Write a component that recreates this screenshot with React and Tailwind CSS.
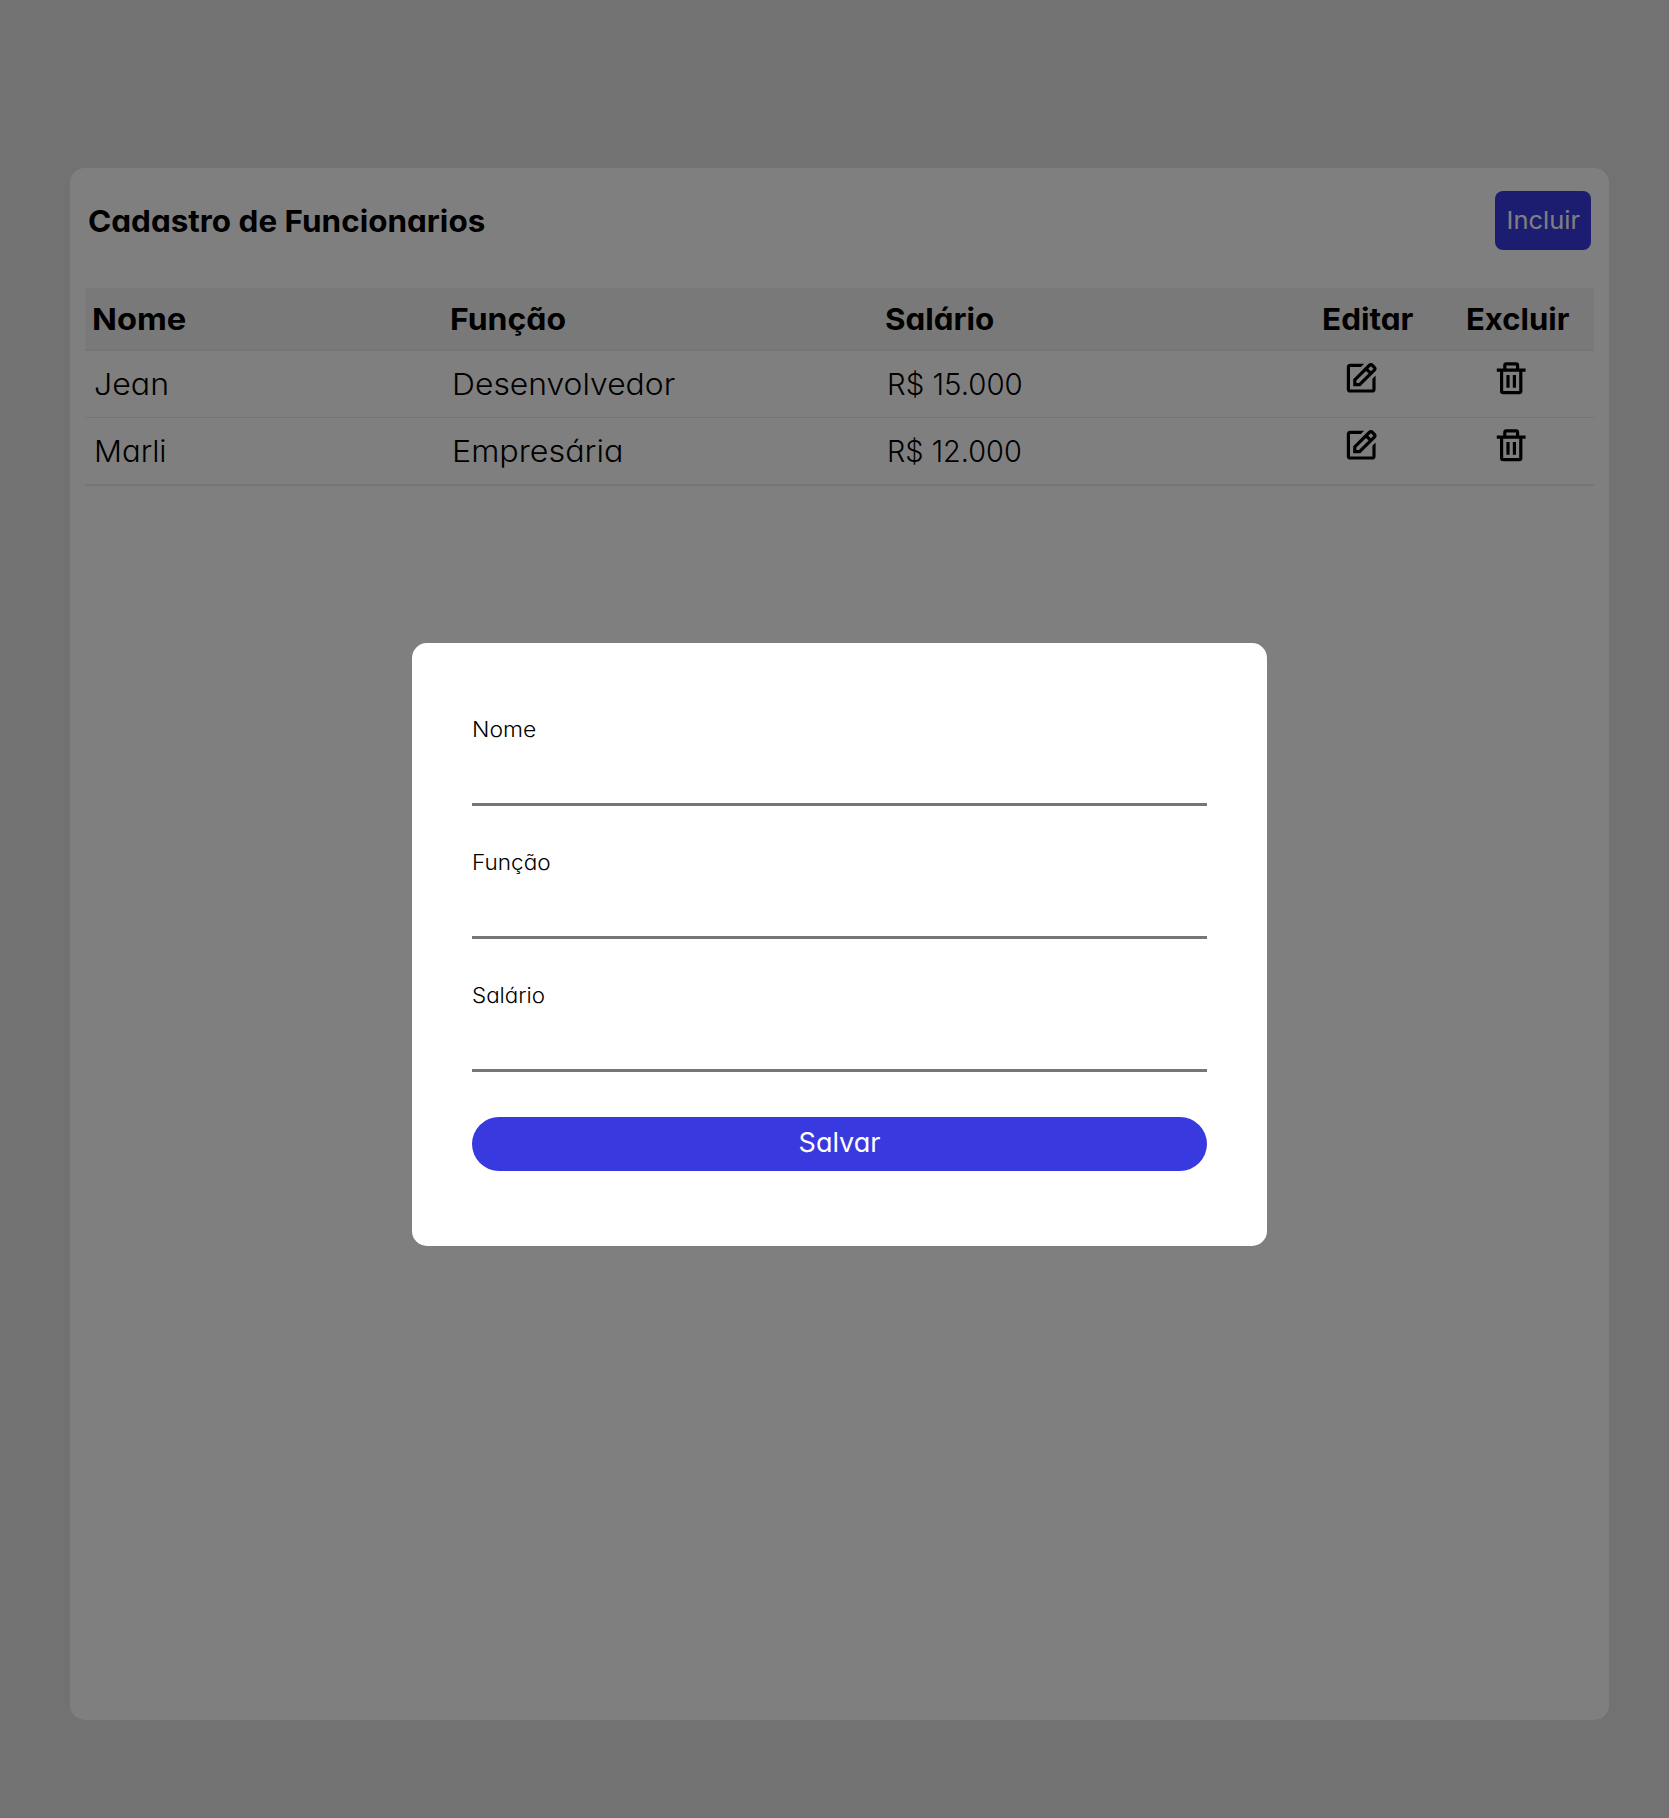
import { BiEdit, BiTrash } from "react-icons/bi";

const columns = [
  { label: "Nome", stretch: "scale-x-[1.09]" },
  { label: "Função", stretch: "scale-x-[1.065]" },
  { label: "Salário", stretch: "scale-x-[1.045]" },
  { label: "Editar", stretch: "scale-x-[1.05]" },
  { label: "Excluir", stretch: "scale-x-[1.035]" },
];

const employees = [
  {
    name: { text: "Jean", stretch: "scale-x-[1.07]" },
    role: { text: "Desenvolvedor", stretch: "scale-x-[1.062]" },
    salary: { text: "R$ 15.000", stretch: "scale-x-[0.98]" },
    row: "h-[67px] border-b",
  },
  {
    name: { text: "Marli", stretch: "scale-x-[1.035]" },
    role: { text: "Empresária", stretch: "scale-x-[1.075]" },
    salary: { text: "R$ 12.000", stretch: "scale-x-[0.963]" },
    row: "h-[68px] border-b-2",
  },
];

const fields = [
  { id: "nome", label: "Nome", stretch: "scale-x-[1.09]" },
  { id: "funcao", label: "Função", stretch: "scale-x-[1.075]" },
  { id: "salario", label: "Salário", stretch: "scale-x-[1.065]" },
];

function Cell({ text, stretch }) {
  return (
    <div className="pl-[9px] leading-[66px] whitespace-nowrap">
      <span className={`inline-block origin-left ${stretch}`}>{text}</span>
    </div>
  );
}

function EmployeeTable() {
  return (
    <section className="w-[1509px] text-[30px]">
      <div className="grid h-[63px] grid-cols-[358px_435px_437px_144px_135px] border-b-2 border-[#ebebeb] bg-[#f3f3f3] font-bold">
        {columns.map(({ label, stretch }) => (
          <div key={label} className="pl-[7px] leading-[62px] whitespace-nowrap">
            <span className={`inline-block origin-left ${stretch}`}>{label}</span>
          </div>
        ))}
      </div>
      {employees.map(({ name, role, salary, row }) => (
        <div
          key={name.text}
          className={`grid grid-cols-[358px_435px_437px_144px_135px] border-[#ebebeb] font-light ${row}`}
        >
          <Cell {...name} />
          <Cell {...role} />
          <Cell {...salary} />
          <button className="flex items-start pt-2 pl-[27px]" aria-label="Editar">
            <BiEdit className="size-[38.4px]" />
          </button>
          <button className="flex items-start pt-2 pl-[33px]" aria-label="Excluir">
            <BiTrash className="size-[38.4px]" />
          </button>
        </div>
      ))}
    </section>
  );
}

function EmployeeModal() {
  return (
    <div className="fixed inset-0 flex items-center justify-center bg-black/50 pt-[71px] pl-[10px]">
      <form className="h-[603px] w-[855px] rounded-[15px] bg-white px-[60px] pt-[71px]">
        {fields.map(({ id, label, stretch }) => (
          <div key={id} className="flex h-[133px] flex-col">
            <label htmlFor={id} className="h-[30px] text-[21px] leading-[31px] font-[350]">
              <span className={`inline-block origin-left ${stretch}`}>{label}</span>
            </label>
            <input
              id={id}
              className="h-[62px] w-full border-b-[3px] border-[#767676] px-2 text-[21px] outline-none"
            />
          </div>
        ))}
        <button
          type="button"
          className="mt-1 h-[54px] w-full rounded-full bg-[#3939e0] pb-[3px] text-[27px] leading-[51px] text-white"
        >
          Salvar
        </button>
      </form>
    </div>
  );
}

export default function App() {
  return (
    <div className="h-[1818px] w-full overflow-hidden bg-[#e4e4e4] pt-[168px] pl-[70px] font-['Inter',sans-serif] text-black [font-feature-settings:'cv11']">
      <main className="h-[1552px] w-[1539px] rounded-[15px] bg-white px-[15px]">
        <header className="flex h-[120px] items-start justify-between pt-[23px] pr-[3px] pl-[3px]">
          <h1 className="origin-left scale-x-[1.048] text-[30px] leading-[60px] font-bold">
            Cadastro de Funcionarios
          </h1>
          <button className="h-[59px] w-24 rounded-[8px] bg-[#3939e0] text-[24.5px] text-white">
            <span className="inline-block scale-x-[1.04]">Incluir</span>
          </button>
        </header>
        <EmployeeTable />
      </main>
      <EmployeeModal />
    </div>
  );
}
